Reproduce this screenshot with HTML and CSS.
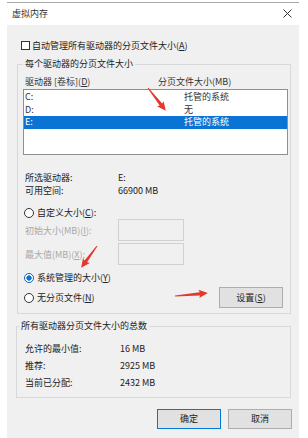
FILE: index.html
```html
<!DOCTYPE html>
<html lang="zh-CN">
<head>
<meta charset="utf-8">
<title>虚拟内存</title>
<link rel="stylesheet" href="styles.css">
</head>
<body>
<div class="page">
  <div class="window">
    <div class="titlebar">
      <span class="title">虚拟内存</span>
      <svg class="close" width="9" height="9" viewBox="0 0 9 9"><path d="M0.5 0.5 L8.5 8.5 M8.5 0.5 L0.5 8.5" stroke="#333" stroke-width="1" fill="none"/></svg>
    </div>
    <div class="content">
      <div class="auto">
        <span class="checkbox"></span>
        <span>自动管理所有驱动器的分页文件大小(<u>A</u>)</span>
      </div>

      <div class="group group1">
        <div class="legend">每个驱动器的分页文件大小</div>
        <div class="cols">
          <span>驱动器 [卷标](<u>D</u>)</span>
          <span>分页文件大小(MB)</span>
        </div>
        <div class="listbox">
          <div class="row"><span>C:</span><span>托管的系统</span></div>
          <div class="row"><span>D:</span><span>无</span></div>
          <div class="row selected"><span>E:</span><span>托管的系统</span></div>
        </div>
        <div class="info">
          <span>所选驱动器:</span><span>E:</span>
          <span>可用空间:</span><span>66900 MB</span>
        </div>
        <div class="radio-row custom">
          <span class="radio"></span>
          <span>自定义大小(<u>C</u>):</span>
        </div>
        <div class="size-row first">
          <span class="disabled">初始大小(MB)(<u>I</u>):</span>
          <span class="textbox"></span>
        </div>
        <div class="size-row second">
          <span class="disabled">最大值(MB)(<u>X</u>):</span>
          <span class="textbox"></span>
        </div>
        <div class="radio-row system">
          <span class="radio checked"></span>
          <span>系统管理的大小(<u>Y</u>)</span>
        </div>
        <div class="last-row">
          <div class="radio-row">
            <span class="radio"></span>
            <span>无分页文件(<u>N</u>)</span>
          </div>
          <button class="btn set">设置(<u>S</u>)</button>
        </div>
      </div>

      <div class="group group2">
        <div class="legend">所有驱动器分页文件大小的总数</div>
        <div class="totals">
          <span>允许的最小值:</span><span>16 MB</span>
          <span>推荐:</span><span>2925 MB</span>
          <span>当前已分配:</span><span>2432 MB</span>
        </div>
      </div>

      <div class="actions">
        <button class="btn default">确定</button>
        <button class="btn">取消</button>
      </div>
    </div>
  </div>
  <svg class="arrows" width="308" height="438" viewBox="0 0 308 438">
    <g fill="#e5382c">
      <polygon transform="translate(148,88) rotate(52)" points="0,-0.5 21,-1.6 20,-4.2 29,0 20,4.2 21,1.6 0,0.5"/>
      <polygon transform="translate(97,246) rotate(126)" points="0,-0.5 19,-1.6 18,-4.2 27,0 18,4.2 19,1.6 0,0.5"/>
      <polygon transform="translate(175,296) rotate(-5)" points="0,-0.5 25,-1.6 24,-4.2 33,0 24,4.2 25,1.6 0,0.5"/>
    </g>
  </svg>
</div>
</body>
</html>
```
FILE: styles.css
```css
* { box-sizing: border-box; }
html, body { margin: 0; padding: 0; background: #fff; }
body {
  font-family: "Noto Sans CJK SC", "Noto Sans", sans-serif;
  font-size: 9px;
  color: #222;
  width: 308px;
  height: 438px;
  overflow: hidden;
}
.page { position: relative; width: 308px; height: 438px; padding-top: 2px; }
u { text-decoration: underline; text-underline-offset: 1px; }

.window { margin-left: 7px; width: 292px; }
.titlebar {
  height: 23px;
  border-top: 1px solid #a8a8a8;
  background: #fff;
  display: flex;
  align-items: center;
  justify-content: space-between;
  padding: 0 7px 0 5px;
}
.title { line-height: 12px; font-size: 9px; color: #333; }
.close { display: block; margin-top: -1px; }

.content {
  background: #f0f0f0;
  height: 413px;
  padding-top: 14px;
}

.auto {
  display: flex;
  align-items: center;
  height: 12px;
  padding-left: 14px;
  gap: 2px;
}
.checkbox {
  width: 9px; height: 9px;
  border: 1px solid #333;
  background: #fff;
  display: block;
}

.group {
  border: 1px solid #d8d8d8;
}
.legend {
  width: fit-content;
  margin-top: -7px;
  padding: 0 2px;
  background: #f0f0f0;
  line-height: 12px;
}
.group1 { margin: 13px 0 0 10px; width: 274px; padding-bottom: 5px; }
.group1 .legend { margin-left: 5px; }

.cols {
  margin-top: 6px;
  padding-left: 7px;
  display: grid;
  grid-template-columns: 133px 1fr;
  line-height: 12px;
  color: #333;
}
.listbox {
  margin: 1px 0 0 5px;
  width: 265px;
  height: 66px;
  border: 1px solid #8f8f8f;
  background: #fff;
  padding-top: 1px;
}
.row {
  display: grid;
  grid-template-columns: 159px 1fr;
  height: 12.5px;
  line-height: 12.5px;
  padding-left: 1px;
  color: #333;
}
.row.selected { background: #0a74d4; color: #fff; }

.info {
  margin-top: 16px;
  padding-left: 7px;
  display: grid;
  grid-template-columns: 93px 1fr;
  line-height: 13px;
}

.radio-row {
  display: flex;
  align-items: center;
  gap: 3px;
  line-height: 12px;
  height: 12px;
}
.custom { margin-top: 10px; padding-left: 6px; }
.system { margin-top: 7px; padding-left: 6px; }
.radio {
  width: 10px; height: 10px;
  border: 1px solid #333;
  border-radius: 50%;
  background: #fff;
  display: block;
}
.radio.checked {
  border-color: #1a5fb0;
  background: radial-gradient(circle, #0a74d4 0 2.4px, #fff 2.9px);
}

.size-row {
  display: grid;
  grid-template-columns: 93px 66px;
  align-items: center;
  padding-left: 7px;
}
.size-row.second { margin-top: 2px; }
.disabled { color: #a8a8a8; }
.textbox {
  display: block;
  height: 22px;
  border: 1px solid #d0d0d0;
  background: #f0f0f0;
}

.last-row {
  margin-top: 3px;
  display: flex;
  align-items: center;
  justify-content: space-between;
  padding-left: 6px;
  padding-right: 7px;
}

.btn {
  font: inherit;
  color: #222;
  width: 64px;
  height: 21px;
  background: #e1e1e1;
  border: 1px solid #adadad;
  padding: 0;
  line-height: 12px;
}
.btn.default { border-color: #0078d7; height: 20px; }

.group2 { margin: 12px 0 0 9px; width: 275px; padding-bottom: 6px; }
.group2 .legend { margin-left: 2px; }
.totals {
  margin-top: 8px;
  padding-left: 8px;
  display: grid;
  grid-template-columns: 95px 1fr;
  line-height: 17px;
}

.actions {
  margin-top: 11px;
  display: flex;
  justify-content: flex-end;
  gap: 7px;
  padding-right: 7px;
}
.actions .btn { height: 20px; }

.arrows { position: absolute; left: 0; top: 0; pointer-events: none; }
```
